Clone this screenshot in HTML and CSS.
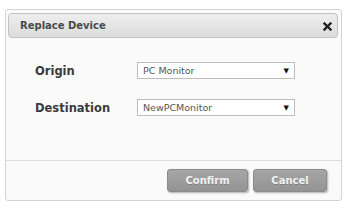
FILE: index.html
```html
<!DOCTYPE html>
<html lang="en">
<head>
    <meta charset="UTF-8">
    <title>Replace Device</title>
    <link rel="stylesheet" href="styles.css">
</head>
<body>
    <div class="dialog">
        <div class="titlebar">
            <span class="title">Replace Device</span>
            <span class="close">
                <svg width="9" height="9" viewBox="0 0 9 9">
                    <path d="M1.5 1.5 L7.5 7.5 M7.5 1.5 L1.5 7.5" stroke="#222" stroke-width="2.4" stroke-linecap="square"/>
                </svg>
            </span>
        </div>
        <div class="form">
            <div class="row">
                <label>Origin</label>
                <div class="select"><span>PC Monitor</span><span class="arrow">&#9660;</span></div>
            </div>
            <div class="row">
                <label>Destination</label>
                <div class="select"><span>NewPCMonitor</span><span class="arrow">&#9660;</span></div>
            </div>
        </div>
        <div class="footer">
            <button class="btn confirm">Confirm</button>
            <button class="btn cancel">Cancel</button>
        </div>
    </div>
</body>
</html>
```

FILE: styles.css
```css
body {
    margin: 0;
    background: #ffffff;
    font-family: "DejaVu Sans", Verdana, sans-serif;
}
.dialog {
    margin: 9px 0 0 5px;
    width: 337px;
    height: 192px;
    box-sizing: border-box;
    border: 1px solid #d4d4d4;
    border-radius: 3px;
    background: #fafafa;
    display: flex;
    flex-direction: column;
}
.titlebar {
    margin: 3px 3px 0 2px;
    height: 25px;
    box-sizing: border-box;
    border: 1px solid #c2c2c2;
    border-radius: 4px;
    background: linear-gradient(#eeeeee, #dcdcdc);
    display: flex;
    align-items: center;
    justify-content: space-between;
    padding: 0 5px 0 11px;
}
.title {
    font-size: 10px;
    font-weight: bold;
    color: #4a4a4a;
}
.close {
    display: flex;
    margin-top: 1px;
}
.form {
    flex: 1;
    padding: 24px 0 0 29px;
    display: flex;
    flex-direction: column;
    gap: 20px;
}
.row {
    display: flex;
    align-items: center;
    height: 17px;
}
.row label {
    width: 102px;
    font-size: 11.5px;
    font-weight: bold;
    color: #3a3a3a;
}
.select {
    width: 158px;
    height: 17px;
    box-sizing: border-box;
    border: 1px solid #bdbdbd;
    background: #ffffff;
    display: flex;
    align-items: center;
    justify-content: space-between;
    padding: 0 5px 0 5px;
    font-size: 9.5px;
    color: #555;
}
.arrow {
    font-size: 7px;
    color: #111;
}
.footer {
    border-top: 1px solid #dcdcdc;
    padding: 8px 14px 0 0;
    height: 40px;
    box-sizing: border-box;
    display: flex;
    justify-content: flex-end;
    gap: 5px;
}
.btn {
    height: 23px;
    border: 1px solid #8c8c8c;
    border-radius: 3px;
    background: linear-gradient(#a6a6a6, #939393);
    box-shadow: 1px 1px 2px rgba(0, 0, 0, 0.3);
    color: #f2f2f2;
    font-family: "DejaVu Sans", Verdana, sans-serif;
    font-size: 10px;
    font-weight: bold;
    text-shadow: 0 1px 0 rgba(0, 0, 0, 0.2);
    padding: 0;
}
.confirm {
    width: 81px;
}
.cancel {
    width: 74px;
}
```
